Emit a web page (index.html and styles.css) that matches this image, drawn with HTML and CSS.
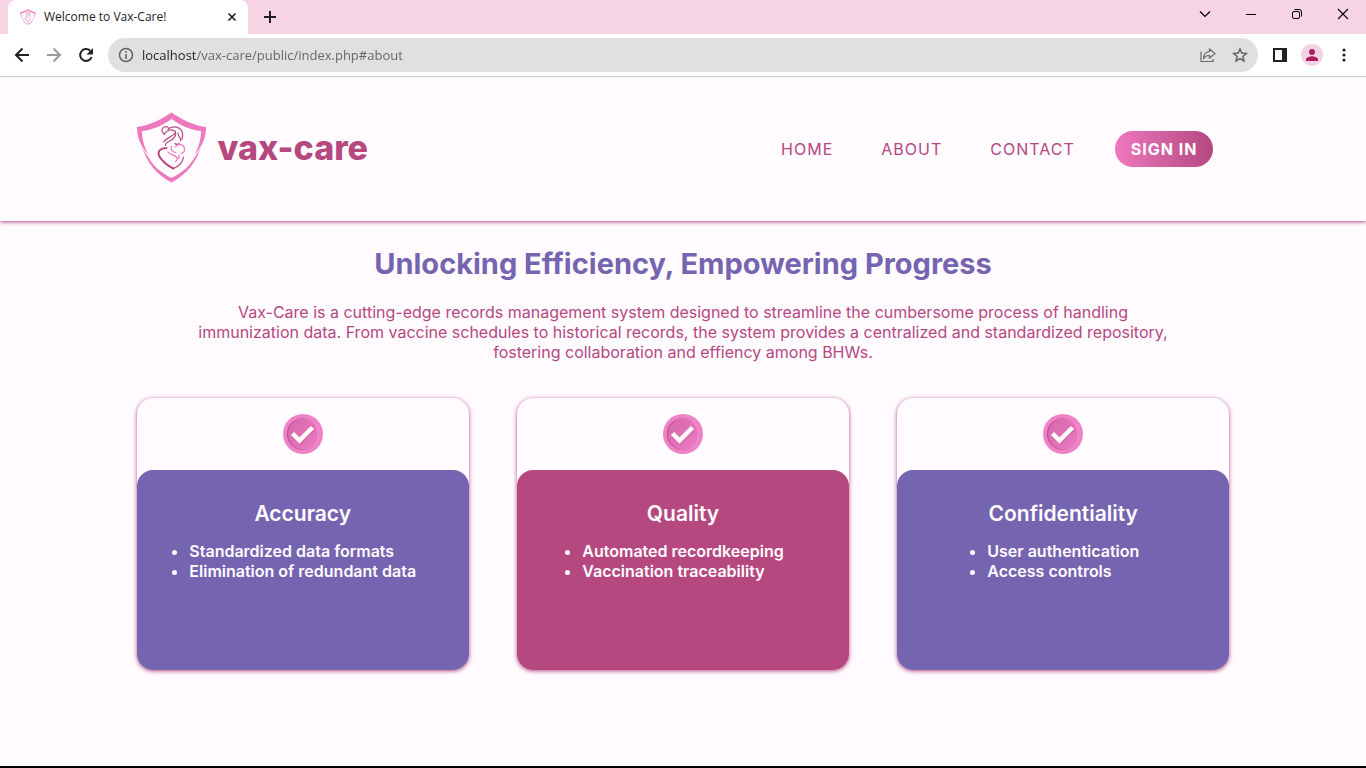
FILE: index.html
```html
<!DOCTYPE html>
<html lang="en">
<head>
<meta charset="utf-8">
<title>Welcome to Vax-Care!</title>
<link rel="stylesheet" href="styles.css">
</head>
<body>
<svg class="defs" aria-hidden="true">
  <defs>
    <symbol id="shield" viewBox="0 0 70 71">
      <g fill="#ee78be">
        <path d="M34.500 0C24 7 13 13 0 14.500C0 23 2 32 12 43C7 35 5 26 5 18.500C16 17.500 26 12.500 34.500 6.500C43 12.500 53 17.500 64 18.500C64 26 62 35 57 43C67 32 69 23 69 14.500C56 13 45 7 34.500 0Z"/>
        <path d="M4.500 32.500C9 49 19 62 34.500 70C50 62 60 49 64.500 32.500C63 38 59.500 42 57.500 45C53 53.500 45 60 34.500 65.500C24 60 16 53.500 11.500 45C9.500 42 6 38 4.500 32.500Z"/>
      </g>
      <g fill="none" stroke="#b4487f" stroke-width="1.200" stroke-linecap="round" stroke-linejoin="round">
        <path d="M31.500 15.500C30 13 25.500 14 25 17.500C24.500 19.500 26 21 27.500 21"/>
        <path d="M31 17C34 13.500 42 13 45 19C46.300 22 46 24 45 27"/>
        <path d="M27 22C30 17 35 16 38.500 19"/>
        <path d="M38.500 19C39.500 24 36 27 32.500 28.500C30 29.500 28.500 31 28.500 33"/>
        <path d="M37.500 21C35 24.500 29 25.500 26.500 29.500"/>
        <path d="M41 20.500C41 24 44.500 25.500 43.500 28.500"/>
        <path d="M42 31C40.500 32 39 32 38 31"/>
        <path d="M29.500 35.500C24.500 35.500 21.500 38 21.500 41C21.500 44.500 25 47.500 28 50.500C30.500 53 33.500 54.500 36.500 56" stroke-width="2"/>
        <path d="M36.500 56C41 54.500 46 50 46.500 44.500"/>
      </g>
      <g fill="none" stroke="#ee78be" stroke-width="1.200" stroke-linecap="round">
        <path d="M38 34.500C41 30.500 47.500 31.500 47.500 37C47.500 39 46 40.500 44 41"/>
        <path d="M34.500 34C33 37 36 40 39 40"/>
        <path d="M31 39.500C33 42.500 37 42 39.500 44.500C41 46 40.500 48 38.500 49"/>
        <path d="M42 42.500C42.500 45 41.500 46 40.500 46.500"/>
      </g>
    </symbol>
    <linearGradient id="coin-face" x1="0" y1="0" x2="1" y2="1">
      <stop offset="0" stop-color="#d767aa"/>
      <stop offset="1" stop-color="#ec7cc2"/>
    </linearGradient>
    <linearGradient id="coin-edge" x1="0" y1="0" x2="1" y2="0">
      <stop offset="0" stop-color="#b85090"/>
      <stop offset="0.500" stop-color="#dd6eb2"/>
      <stop offset="1" stop-color="#f291cf"/>
    </linearGradient>
    <symbol id="check" viewBox="0 0 40 40">
      <circle cx="20" cy="20" r="20" fill="#ef82c7"/>
      <circle cx="20" cy="20" r="15.500" fill="url(#coin-face)" stroke="url(#coin-edge)" stroke-width="1.200"/>
      <path d="M10.500 21L17 28L30.500 15" fill="none" stroke="#b84a8b" stroke-opacity=".35" stroke-width="4.500"/>
      <path d="M9.500 19.500L16.500 26.500L29.500 13.500" fill="none" stroke="#fbf8f8" stroke-width="4.500"/>
    </symbol>
  </defs>
</svg>

<div class="browser">
  <div class="tab-strip">
    <div class="tab">
      <svg class="favicon"><use href="#shield"/></svg>
      <span class="tab-title">Welcome to Vax-Care!</span>
      <button class="tab-close" aria-label="Close tab"><svg width="10" height="10" viewBox="0 0 10 10"><path d="M1.500 1.500l7 7M8.500 1.500l-7 7" stroke="#202124" stroke-width="1.700"/></svg></button>
    </div>
    <button class="new-tab" aria-label="New tab"><svg width="12" height="12" viewBox="0 0 12 12"><path d="M6 0v12M0 6h12" stroke="#202124" stroke-width="2"/></svg></button>
    <div class="window-controls">
      <button aria-label="Search tabs"><svg width="12" height="12" viewBox="0 0 12 12"><path d="M1 3.500l5 5 5-5" fill="none" stroke="#000" stroke-width="1.200"/></svg></button>
      <button aria-label="Minimize"><svg width="12" height="12" viewBox="0 0 12 12"><path d="M1 6.500h10" stroke="#000"/></svg></button>
      <button aria-label="Restore"><svg width="12" height="12" viewBox="0 0 12 12" fill="none" stroke="#000"><rect x="1.500" y="3.500" width="7" height="7" rx="1.500"/><path d="M3.500 1.500h4.500q2.500 0 2.500 2.500v4.500"/></svg></button>
      <button aria-label="Close window"><svg width="12" height="12" viewBox="0 0 12 12"><path d="M1 1l10 10M11 1L1 11" stroke="#000" stroke-width="1.100"/></svg></button>
    </div>
  </div>
  <div class="toolbar">
    <button class="tool" aria-label="Back"><svg width="16" height="16" viewBox="0 0 16 16" fill="none" stroke="#202124" stroke-width="2"><path d="M15 8H2.500M8.500 1.500L2 8l6.500 6.500"/></svg></button>
    <button class="tool" aria-label="Forward"><svg width="16" height="16" viewBox="0 0 16 16" fill="none" stroke="#9b9b9d" stroke-width="2"><path d="M1 8h12.500M7.500 1.500L14 8l-6.500 6.500"/></svg></button>
    <button class="tool" aria-label="Reload"><svg width="16" height="16" viewBox="0 0 16 16"><path d="M13.600 10A5.900 5.900 0 1 1 12.200 3.800" fill="none" stroke="#202124" stroke-width="2"/><path d="M15 1v6.500H8.500z" fill="#202124"/></svg></button>
    <form class="omnibox">
      <svg class="info" width="16" height="16" viewBox="0 0 16 16"><circle cx="8" cy="8" r="6.500" fill="none" stroke="#5f6368" stroke-width="1.500"/><path d="M8 7v5M8 4v1.700" stroke="#5f6368" stroke-width="1.600"/></svg>
      <input class="address" type="text" aria-label="Address" value="localhost/vax-care/public/index.php#about">
      <button type="button" class="tool" aria-label="Share"><svg width="16" height="16" viewBox="0 0 16 16" fill="none" stroke="#68696c" stroke-width="1.200"><path d="M1 4.500v10h12v-2.500"/><path d="M9.500 2l5.500 4.500-5.500 4.500V8.500C6.500 8.300 4.800 9.500 3.500 12 3.500 8 5.500 5 9.500 4.500z"/></svg></button>
      <button type="button" class="tool" aria-label="Bookmark"><svg width="16" height="16" viewBox="0 0 16 16" fill="none" stroke="#5f6368" stroke-width="1.500"><path d="M8 2l1.800 4.100 4.500.4-3.400 3 1 4.400L8 11.600l-3.900 2.300 1-4.400-3.400-3 4.500-.4z"/></svg></button>
    </form>
    <button class="tool" aria-label="Side panel"><svg width="14" height="14" viewBox="0 0 14 14"><path fill-rule="evenodd" fill="#202124" d="M0 0h14v14H0zM2 2v10h7V2z"/></svg></button>
    <button class="tool profile" aria-label="Profile"><svg width="22" height="22" viewBox="0 0 22 22"><circle cx="11" cy="11" r="11" fill="#f5d2e1"/><circle cx="11" cy="8" r="3" fill="#ad1e64"/><path d="M5 17v-1.500c0-2.200 4-3.300 6-3.300s6 1.100 6 3.300V17z" fill="#ad1e64"/></svg></button>
    <button class="tool" aria-label="Menu"><svg width="4" height="14" viewBox="0 0 4 14" fill="#202124"><circle cx="2" cy="2" r="1.600"/><circle cx="2" cy="7" r="1.600"/><circle cx="2" cy="12" r="1.600"/></svg></button>
  </div>
</div>

<header class="site-header">
  <div class="container header-row">
    <a class="brand" href="#home">
      <svg class="brand-mark"><use href="#shield"/></svg>
      <span class="brand-name">vax-care</span>
    </a>
    <nav class="nav">
      <a href="#home">HOME</a>
      <a href="#about">ABOUT</a>
      <a href="#contact">CONTACT</a>
      <button class="sign-in">SIGN IN</button>
    </nav>
  </div>
</header>

<main class="container about" id="about">
  <h1>Unlocking Efficiency, Empowering Progress</h1>
  <p class="intro">Vax-Care is a cutting-edge records management system designed to streamline the cumbersome process of handling immunization data. From vaccine schedules to historical records, the system provides a centralized and standardized repository, fostering collaboration and effiency among BHWs.</p>
  <div class="cards">
    <section class="card">
      <svg class="check"><use href="#check"/></svg>
      <div class="card-body">
        <h2>Accuracy</h2>
        <ul><li>Standardized data formats</li><li>Elimination of redundant data</li></ul>
      </div>
    </section>
    <section class="card">
      <svg class="check"><use href="#check"/></svg>
      <div class="card-body rose">
        <h2>Quality</h2>
        <ul><li>Automated recordkeeping</li><li>Vaccination traceability</li></ul>
      </div>
    </section>
    <section class="card">
      <svg class="check"><use href="#check"/></svg>
      <div class="card-body">
        <h2>Confidentiality</h2>
        <ul><li>User authentication</li><li>Access controls</li></ul>
      </div>
    </section>
  </div>
</main>
</body>
</html>
```
FILE: styles.css
```css
* { box-sizing: border-box; }

:root {
  --rose: #b4487f;
  --pink: #ee78be;
  --violet: #7564af;
  --paper: #fffbff;
}

body {
  margin: 0;
  min-height: 100vh;
  display: flex;
  flex-direction: column;
  background: var(--paper);
  border-bottom: 2px solid #000;
  font: 16px/20px Inter, sans-serif;
}

button {
  display: flex;
  align-items: center;
  justify-content: center;
  padding: 0;
  border: 0;
  background: none;
  font: inherit;
}

a { text-decoration: none; }
.defs { position: absolute; width: 0; height: 0; }

/* Browser frame */
.browser {
  z-index: 1;
  background: #fff;
  border-bottom: 1px solid #ccc9cb;
  font-family: "Open Sans", sans-serif;
}

.tab-strip {
  display: flex;
  height: 34px;
  padding-left: 8px;
  background: #f6d4e3;
}

.tab {
  display: flex;
  align-items: center;
  gap: 8px;
  width: 240px;
  padding: 0 10px 0 12px;
  border-radius: 8px 8px 0 0;
  background: #fff;
  color: #202124;
}

.favicon { width: 16px; height: 16px; }
.tab-title { flex: 1; font-size: 12px; white-space: nowrap; }
.tab-close { width: 12px; height: 16px; }
.new-tab { width: 44px; }

.window-controls {
  display: flex;
  margin-left: auto;
  padding-bottom: 6px;
}
.window-controls button { width: 46px; }

.toolbar {
  display: flex;
  align-items: center;
  height: 42px;
  padding: 0 6px;
}
.tool { width: 32px; height: 32px; flex: none; }

.omnibox {
  display: flex;
  flex: 1;
  align-items: center;
  height: 34px;
  margin: 0 6px;
  padding: 0 2px 0 10px;
  border-radius: 17px;
  background: #e0e0e0;
}

.address {
  flex: 1;
  min-width: 0;
  height: 28px;
  margin-left: 8px;
  padding: 0;
  border: 0;
  font: 13px/20px "Open Sans", sans-serif;
  color: transparent;
  background: linear-gradient(to right, #202124 55px, #5f6368 55px);
  background-clip: text;
  -webkit-background-clip: text;
}

/* Site */
.container { width: 80%; margin: 0 auto; }

.site-header {
  padding: 33px 0 35px;
  box-shadow: 0 1px 4px var(--rose);
}

.header-row {
  display: flex;
  align-items: center;
  justify-content: space-between;
}

.brand { display: flex; align-items: center; gap: 11px; }
.brand-mark { width: 70px; height: 76px; }
.brand-name {
  font-size: 34px;
  line-height: 40px;
  font-weight: 800;
  color: var(--rose);
}

.nav {
  display: flex;
  align-items: center;
  gap: 48px;
  padding: 2px 16px 0 0;
  letter-spacing: 1px;
}
.nav a { color: var(--rose); }

.sign-in {
  height: 36px;
  margin-left: -8px;
  padding: 0 16px;
  border-radius: 18px;
  background: linear-gradient(to right, var(--pink), var(--rose));
  color: #fff;
  font-weight: 700;
  letter-spacing: inherit;
}

.about { padding-top: 23px; text-align: center; }

h1 {
  margin: 0;
  color: var(--violet);
  font-size: 29px;
  line-height: 40px;
  font-weight: 700;
}

.intro {
  margin: 18px 0 36px;
  padding: 0 60px;
  color: var(--rose);
}

.cards {
  display: grid;
  grid-template-columns: repeat(3, 1fr);
  gap: 48px;
}

.card {
  border-radius: 16px;
  box-shadow: 0 1px 4px var(--rose);
}

.check { display: block; width: 40px; height: 40px; margin: 16px auto; }

.card-body {
  min-height: 200px;
  padding: 28px 16px;
  border-radius: 16px;
  background: var(--violet);
  color: var(--paper);
  font-weight: 600;
}
.rose { background: var(--rose); }

h2 {
  margin: 0 0 11px;
  font-size: 21px;
  line-height: 32px;
  font-weight: 600;
}

.card ul {
  width: fit-content;
  margin: 0 auto;
  padding: 0;
  text-align: left;
}
```
